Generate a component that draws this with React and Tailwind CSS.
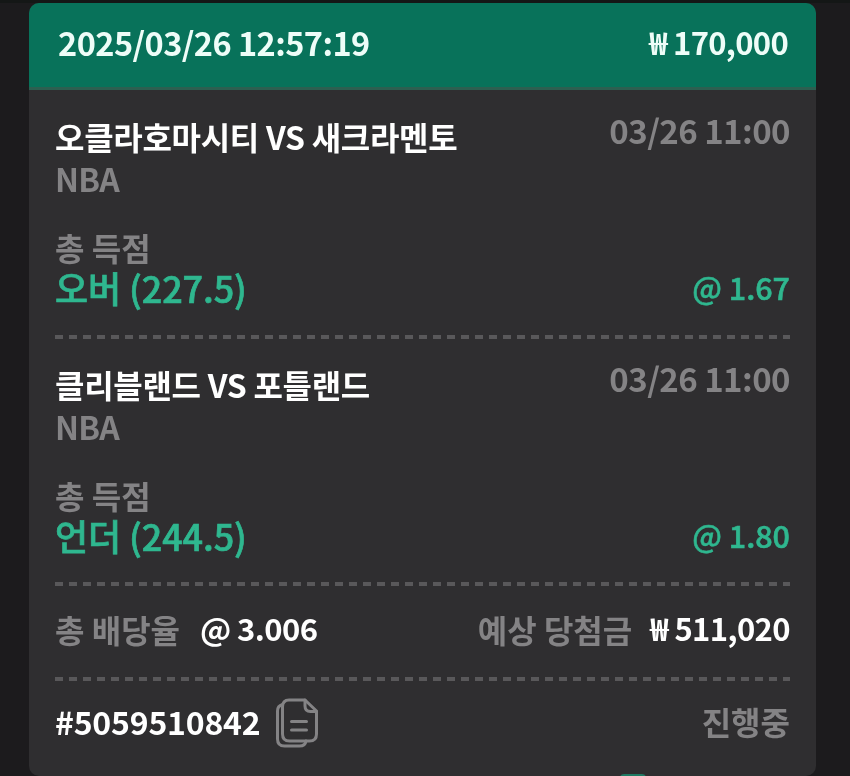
const FONT = '"Noto Sans CJK KR", "Noto Sans", sans-serif';

function Dashed() {
  return <div className="h-[4px] bg-[repeating-linear-gradient(90deg,#59585a_0_8px,transparent_8px_14px)]" />;
}

function Bet({ teams, pick }) {
  return (
    <div>
      <div className="flex justify-between items-start h-[46px]">
        <span className="text-[32px] leading-[50px] font-bold text-white tracking-[-0.3px]">{teams}</span>
        <span className="text-[33px] leading-[38px] font-bold text-[#848385] tracking-[-0.55px]">03/26 11:00</span>
      </div>
      <div className="text-[32px] leading-[40px] font-bold text-[#848385] tracking-[-0.8px] mt-[1px]">NBA</div>
      <div className="text-[32px] leading-[39px] font-bold text-[#848385] mt-[30px]">총 득점</div>
      <div className="flex justify-between items-center h-[40px]">
        <span className="text-[36px] leading-[40px] font-medium text-[#2fb78f] tracking-[-0.1px] [-webkit-text-stroke:0.7px_#2fb78f]">{pick.label}</span>
        <span className="text-[30.5px] leading-[40px] font-medium text-[#2fb78f] [-webkit-text-stroke:0.6px_#2fb78f]">{pick.odds}</span>
      </div>
    </div>
  );
}

export default function App() {
  return (
    <div className="relative h-[776px] w-[850px] overflow-hidden bg-[#1c1b1d] border-t-[3px] border-[#141716] pl-[29px]" style={{ fontFamily: FONT }}>
      <div className="w-[787px] h-[773px] rounded-[10px] overflow-hidden bg-[#2f2e30] blur-[0.4px]">
        <div className="h-[87px] bg-[#08725a] border-b-[3px] border-[#2c5f50] flex items-center justify-between pl-[29px] pr-[28px] pb-[6px] text-[#eefdf8] font-bold">
          <span className="text-[32.5px] tracking-[-0.55px]">2025/03/26 12:57:19</span>
          <span className="text-[31px] tracking-[-0.7px]">₩ 170,000</span>
        </div>
        <div className="px-[26px] pt-[21px]">
          <Bet teams="오클라호마시티 VS 새크라멘토" pick={{ label: "오버 (227.5)", odds: "@ 1.67" }} />
          <div className="mt-[28px] mb-[20px]"><Dashed /></div>
          <Bet teams="클리블랜드 VS 포틀랜드" pick={{ label: "언더 (244.5)", odds: "@ 1.80" }} />
          <div className="mt-[27px]"><Dashed /></div>
          <div className="flex justify-between items-center h-[91px] pb-[6px]">
            <div className="flex items-center gap-[20px]">
              <span className="text-[32px] font-bold text-[#848385]">총 배당율</span>
              <span className="text-[31px] font-bold text-white tracking-[-0.6px]">@ 3.006</span>
            </div>
            <div className="flex items-center gap-[18px]">
              <span className="text-[32px] font-bold text-[#848385]">예상 당첨금</span>
              <span className="text-[31px] font-bold text-white tracking-[-0.6px]">₩ 511,020</span>
            </div>
          </div>
          <Dashed />
          <div className="flex justify-between items-center h-[80px]">
            <div className="flex items-center gap-[15px]">
              <span className="text-[32px] font-bold text-white tracking-[-0.2px]">#5059510842</span>
              <svg className="mt-[4px]" width="44" height="50" viewBox="0 0 44 50" fill="none" stroke="#848385" strokeWidth="3" strokeLinejoin="round" strokeLinecap="round">
                <path d="M7.500 6.500C4 7.500 2.500 9.500 2.500 13v28c0 4.500 2.500 7 7 7h15c3.500 0 6-1.500 6.500-5" />
                <path d="M14 2h16L41.500 13v23c0 4.500-2.500 7-7 7H14.500c-4.500 0-7-2.500-7-7V9c0-4.500 2.500-7 6.500-7z" />
                <path d="M30 2v6c0 3.500 2 5.500 5.500 5.500h6" />
                <path d="M16.500 23.500h15M16.500 32h15" />
              </svg>
            </div>
            <span className="text-[32px] font-bold text-[#848385]">진행중</span>
          </div>
        </div>
      </div>
      <div className="absolute left-[620px] top-[771px] w-[26px] h-[4px] rounded-t-full bg-[#1f7a63]" />
    </div>
  );
}
